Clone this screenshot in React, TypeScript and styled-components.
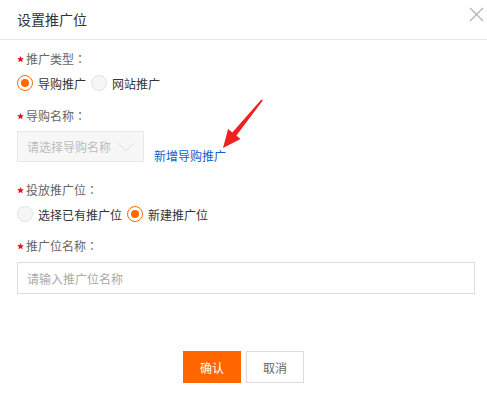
import styled, { createGlobalStyle } from "styled-components";

const GlobalStyle = createGlobalStyle`
  html, body {
    margin: 0;
    padding: 0;
    background: #fff;
  }
  body {
    font-family: "Noto Sans CJK SC", "Liberation Sans", sans-serif;
  }
`;

export default function App() {
  return (
    <Dialog>
      <GlobalStyle />
      <Header>
        <Title>设置推广位</Title>
        <CloseButton aria-label="close">
          <svg width="15" height="15" viewBox="0 0 15 15">
            <path d="M1 1 L14 14 M14 1 L1 14" stroke="#b3b3b3" strokeWidth="1.3" fill="none" />
          </svg>
        </CloseButton>
      </Header>

      <Body>
        <FormItem $top={9}>
          <Label><Star>*</Star>推广类型<Colon>：</Colon></Label>
          <RadioGroup>
            <RadioOption><RadioCircle $checked />导购推广</RadioOption>
            <RadioOption><RadioCircle />网站推广</RadioOption>
          </RadioGroup>
        </FormItem>

        <FormItem $top={11}>
          <Label><Star>*</Star>导购名称<Colon>：</Colon></Label>
          <SelectRow>
            <Select>
              <span>请选择导购名称</span>
              <svg width="18" height="10" viewBox="0 0 18 10">
                <path d="M1 1 L9 9 L17 1" stroke="#dcdcdc" strokeWidth="1" fill="none" />
              </svg>
            </Select>
            <Link>新增导购推广</Link>
          </SelectRow>
        </FormItem>

        <FormItem $top={18}>
          <Label><Star>*</Star>投放推广位<Colon>：</Colon></Label>
          <RadioGroup>
            <RadioOption><RadioCircle />选择已有推广位</RadioOption>
            <RadioOption><RadioCircle $checked />新建推广位</RadioOption>
          </RadioGroup>
        </FormItem>

        <FormItem $top={10}>
          <Label><Star>*</Star>推广位名称<Colon>：</Colon></Label>
          <TextInput placeholder="请输入推广位名称" />
        </FormItem>
      </Body>

      <Footer>
        <PrimaryButton>确认</PrimaryButton>
        <GhostButton>取消</GhostButton>
      </Footer>

      <Arrow width="56" height="60" viewBox="0 0 56 60">
        <polygon
          points="8,53 25.5,44 21.4,40.4 47.8,5.6 46.4,4.4 17.3,37.5 13.1,34"
          fill="#ef2020"
        />
      </Arrow>
    </Dialog>
  );
}

const Dialog = styled.div`
  position: relative;
  width: 487px;
  height: 402px;
  background: #fff;
`;

const Header = styled.div`
  height: 39px;
  border-bottom: 1px solid #e8e8e8;
  display: flex;
  justify-content: space-between;
  align-items: flex-start;
  padding: 0 3px 0 17px;
`;

const Title = styled.h2`
  margin: 0;
  font-size: 14px;
  font-weight: 400;
  color: #333;
  line-height: 39px;
`;

const CloseButton = styled.button`
  border: none;
  background: none;
  padding: 0;
  margin-top: 7px;
  width: 15px;
  height: 15px;
  display: flex;
  cursor: pointer;
`;

const Body = styled.div`
  padding: 0 13px 0 17px;
`;

const FormItem = styled.div<{ $top: number }>`
  margin-top: ${(p) => p.$top}px;
`;

const Label = styled.div`
  height: 20px;
  line-height: 20px;
  font-size: 12px;
  color: #666;
  display: flex;
  align-items: center;
`;

const Star = styled.span`
  color: #e60012;
  width: 9px;
  font-size: 14px;
  font-weight: 700;
  line-height: 20px;
  margin-top: 5px;
`;

const Colon = styled.span`
  font-family: "Noto Sans CJK TC", "Noto Sans CJK SC", sans-serif;
`;

const RadioGroup = styled.div`
  margin-top: 2px;
  height: 24px;
  display: flex;
  align-items: center;
  gap: 5px;
`;

const RadioOption = styled.label`
  display: flex;
  align-items: center;
  gap: 5px;
  font-size: 12px;
  color: #333;
  cursor: pointer;
`;

const RadioCircle = styled.span<{ $checked?: boolean }>`
  box-sizing: border-box;
  width: 16px;
  height: 16px;
  border-radius: 50%;
  border: ${(p) => (p.$checked ? "1.5px solid #ff6a00" : "1px solid #e3e3e3")};
  background: ${(p) => (p.$checked ? "#fff" : "#f6f6f6")};
  display: flex;
  align-items: center;
  justify-content: center;

  &::after {
    content: "";
    display: ${(p) => (p.$checked ? "block" : "none")};
    width: 8px;
    height: 8px;
    border-radius: 50%;
    background: #ff6a00;
  }
`;

const SelectRow = styled.div`
  margin-top: 5px;
  display: flex;
  align-items: flex-end;
  gap: 10px;
`;

const Select = styled.div`
  box-sizing: border-box;
  width: 127px;
  height: 31px;
  border: 1px solid #e8e8e8;
  background: #f7f7f7;
  display: flex;
  align-items: center;
  justify-content: space-between;
  padding: 0 8px 0 9px;
  font-size: 12px;
  color: #bbb;
`;

const Link = styled.a`
  font-size: 12px;
  line-height: 12px;
  color: #0b63c9;
  cursor: pointer;
`;

const TextInput = styled.input`
  box-sizing: border-box;
  display: block;
  margin-top: 6px;
  width: 458px;
  height: 32px;
  border: 1px solid #ddd;
  outline: none;
  padding: 0 9px;
  font-family: inherit;
  font-size: 12px;
  color: #333;

  &::placeholder {
    color: #aaa;
  }
`;

const Footer = styled.div`
  margin-top: 57px;
  display: flex;
  justify-content: center;
  gap: 5px;
`;

const BaseButton = styled.button`
  box-sizing: border-box;
  width: 58px;
  height: 32px;
  font-family: inherit;
  font-size: 12px;
  cursor: pointer;
`;

const PrimaryButton = styled(BaseButton)`
  border: none;
  background: #ff6600;
  color: #fff;
`;

const GhostButton = styled(BaseButton)`
  border: 1px solid #dcdcdc;
  background: #fff;
  color: #666;
`;

const Arrow = styled.svg`
  position: absolute;
  left: 215px;
  top: 95px;
  pointer-events: none;
`;
